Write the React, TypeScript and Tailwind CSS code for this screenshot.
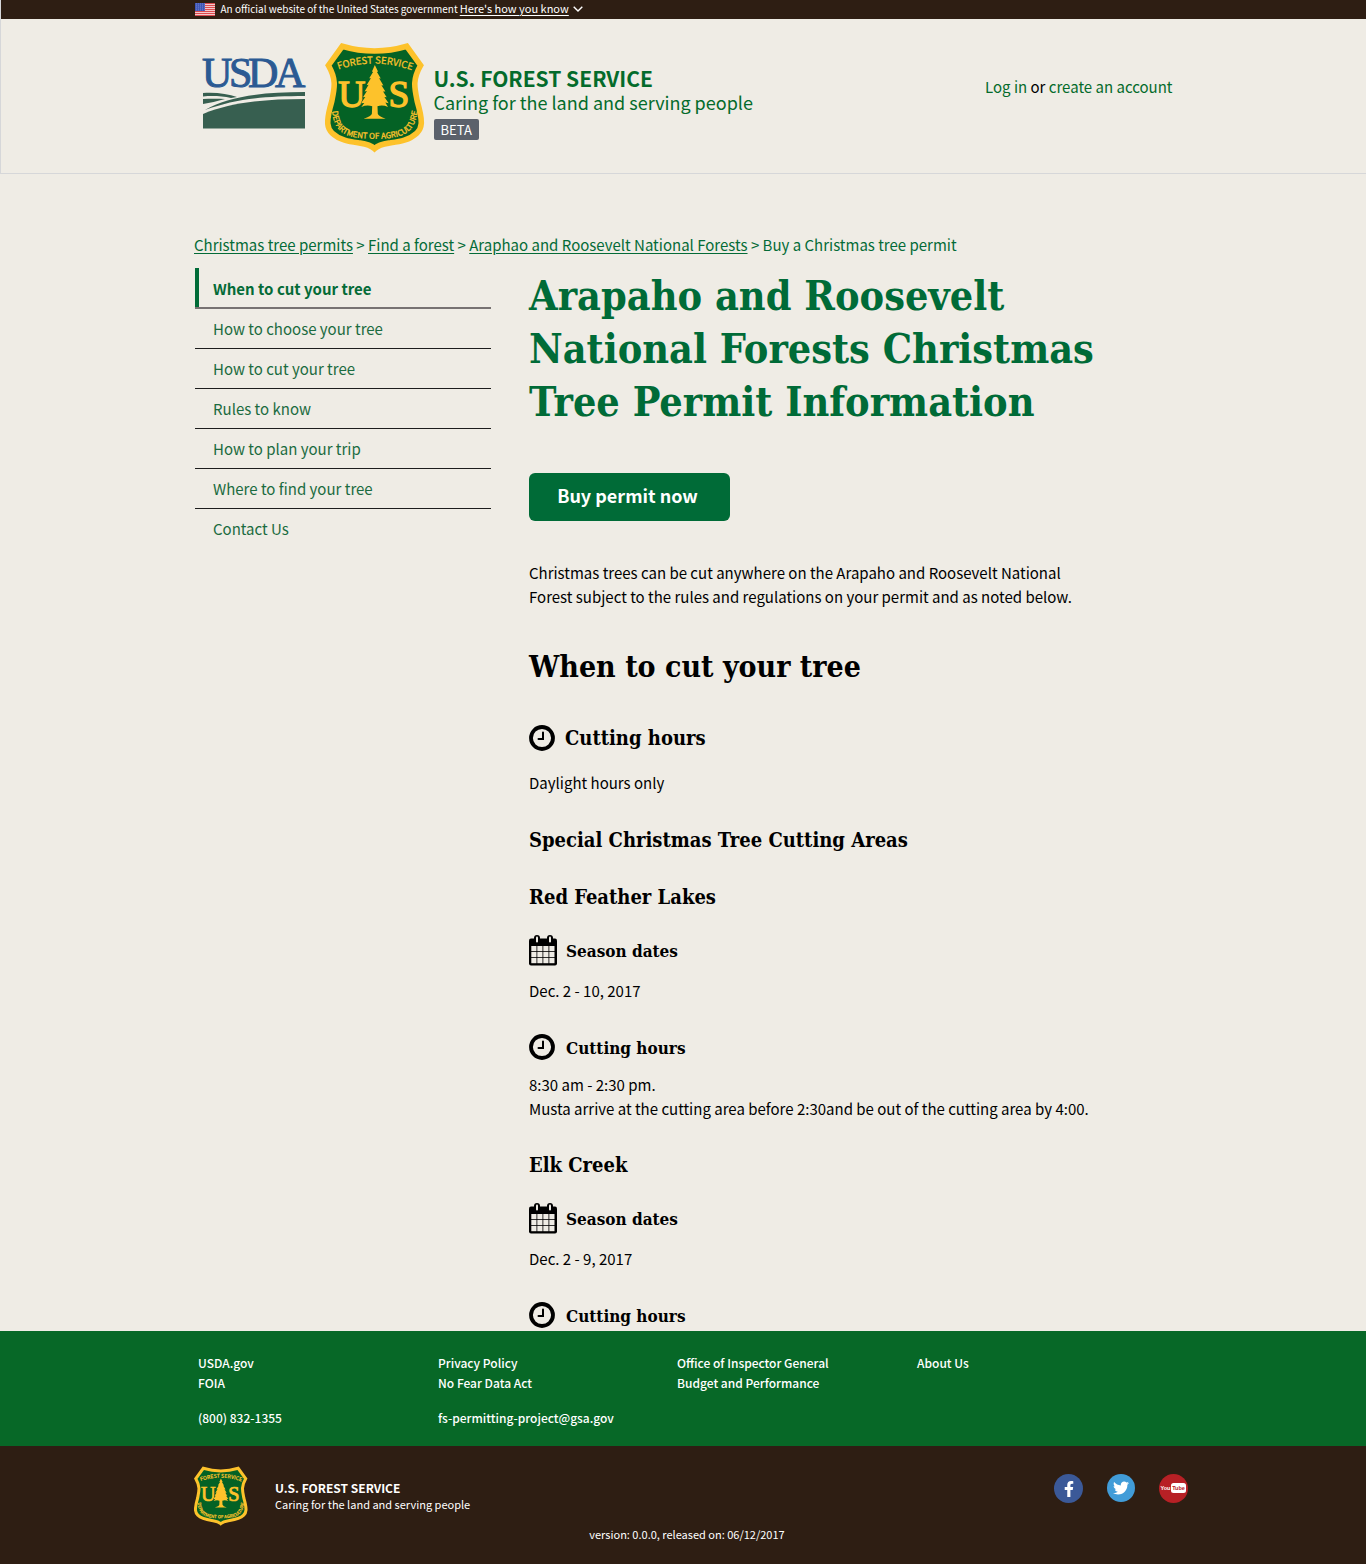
import type { ReactNode } from "react";
import { FaFacebookF, FaTwitter } from "react-icons/fa";

const navItems = [
  "When to cut your tree",
  "How to choose your tree",
  "How to cut your tree",
  "Rules to know",
  "How to plan your trip",
  "Where to find your tree",
  "Contact Us",
];

const footerColumns = [
  ["USDA.gov", "FOIA", "(800) 832-1355"],
  ["Privacy Policy", "No Fear Data Act", "fs-permitting-project@gsa.gov"],
  ["Office of Inspector General", "Budget and Performance"],
  ["About Us"],
];

function Container({ children, className = "" }: { children: ReactNode; className?: string }) {
  return <div className={`mx-auto w-full max-w-[978px] ${className}`}>{children}</div>;
}

function Flag() {
  return (
    <svg viewBox="0 0 20 13" className="h-[13px] w-5 shrink-0" aria-hidden="true">
      <rect width="20" height="13" fill="#f3c9cb" />
      {[0, 2, 4, 6, 8, 10, 12].map((y) => (
        <rect key={y} y={y} width="20" height="1" fill="#dc4a4e" />
      ))}
      <rect width="10" height="8" fill="#3f56b5" />
      {[1, 3, 5, 7].map((y) =>
        [1, 3, 5, 7, 9].map((x) => (
          <rect key={`${x}-${y}`} x={x} y={y - 0.5} width="0.8" height="0.8" fill="#8f9cdc" />
        )),
      )}
    </svg>
  );
}

function UsdaLogo() {
  return (
    <svg viewBox="0 0 103 72" className="h-[72px] w-[103px] shrink-0 overflow-visible" role="img" aria-label="USDA">
      <text
        x="0 27 46 73"
        y="30"
        fontFamily="'Liberation Serif', serif"
        fontSize="42"
        fill="#2b5a93"
        stroke="#2b5a93"
        strokeWidth="1"
      >
        USDA
      </text>
      <g fill="#375f50">
        <path d="M1 36 C14 35 26 37 35 40 L29 41 C20 39 10 38.500 1 39.500Z" />
        <path d="M1 42 C9 41.500 16 41.500 23 42 C15 44 8 46 1 47Z" />
        <path d="M3 53 C25 40 58 35 103 35 V39 C62 39 33 42 3 53Z" />
        <path d="M1 57 C28 46 60 42 103 42 V71.500 H1Z" />
      </g>
    </svg>
  );
}

function Shield({ className, id }: { className: string; id: string }) {
  return (
    <svg viewBox="402 34 301 337" className={className} role="img" aria-label="Forest Service shield">
      <defs>
        <path id={`${id}-top`} d="M436 120 Q551 78 670 122" />
        <path id={`${id}-bottom`} d="M421 236 C428 308 455 327 551 328 C647 327 674 308 683 236" />
      </defs>
      <path
        d="M453 47 Q551 76 649 47 L691 105 C665 150 673 175 681 215 C700 280 694 296 680 310 C655 334 620 337 594 341 Q565 345 551 358 Q537 345 508 341 C482 337 447 334 422 310 C408 296 402 280 421 215 C429 175 437 150 411 105Z"
        fill="#046225"
        stroke="#fdc22b"
        strokeWidth="17"
      />
      <g fill="#fdc22b" stroke="#fdc22b" fontFamily="'Noto Sans CJK SC', sans-serif" textAnchor="middle">
        <text fontSize="29" strokeWidth="0.8">
          <textPath href={`#${id}-top`} startOffset="50%">FOREST SERVICE</textPath>
        </text>
        <text fontSize="24" strokeWidth="1">
          <textPath href={`#${id}-bottom`} startOffset="50%">DEPARTMENT OF AGRICULTURE</textPath>
        </text>
        <g fontFamily="'Liberation Serif', serif" fontSize="114" strokeWidth="4">
          <text x="482" y="232">U</text>
          <text x="625" y="232">S</text>
        </g>
      </g>
      <path
        fill="#fdc22b"
        stroke="#046225"
        strokeWidth="3"
        paintOrder="stroke"
        d="M552 104 L562 124 L558 124 L570 145 L565 144 L578 166 L572 165 L584 184 L577 184 L588 202 L581 201 L594 220 L584 218 L592 231 Q575 224 560 229 L561 252 Q563 260 585 267 H518 Q541 260 543 252 L544 229 Q528 224 511 231 L520 219 L510 220 L523 201 L516 202 L528 183 L521 184 L533 164 L527 165 L540 144 L535 144 L547 124 L543 124Z"
      />
    </svg>
  );
}

function ClockIcon() {
  return (
    <svg viewBox="0 0 26 26" className="size-[26px] shrink-0" fill="none" stroke="#000" aria-hidden="true">
      <circle cx="13" cy="13" r="11" strokeWidth="3.800" />
      <path d="M14 7.500 V14 H9.500" strokeWidth="2" strokeLinecap="round" />
    </svg>
  );
}

function CalendarIcon() {
  return (
    <svg viewBox="0 0 28 31" className="h-[31px] w-7 shrink-0" aria-hidden="true">
      <rect x="0" y="3.500" width="28" height="27" rx="2" fill="#000" />
      <rect x="5" y="0" width="6" height="9" rx="3" fill="#000" />
      <rect x="18" y="0" width="6" height="9" rx="3" fill="#000" />
      <rect x="7" y="1.500" width="2" height="6" rx="1" fill="#efece5" />
      <rect x="20" y="1.500" width="2" height="6" rx="1" fill="#efece5" />
      {[11, 17, 23].map((y) =>
        [2, 8, 14, 20].map((x) => (
          <rect key={`${x}-${y}`} x={x + 0.3} y={y} width="5.200" height="5.200" fill="#efece5" />
        )),
      )}
    </svg>
  );
}

function IconHeading({ icon, children }: { icon: ReactNode; children: ReactNode }) {
  return (
    <h4 className="flex h-8 items-center gap-[9px] font-[DejaVu_Serif_Condensed,DejaVu_Serif,serif] text-[17px] font-bold">
      <span className="flex w-7">{icon}</span>
      <span className="mt-[2px]">{children}</span>
    </h4>
  );
}

function AreaHeading({ children }: { children: ReactNode }) {
  return (
    <h3 className="font-[DejaVu_Serif_Condensed,DejaVu_Serif,serif] text-[20px] leading-8 font-bold">{children}</h3>
  );
}

function FooterLink({ children }: { children: string }) {
  return (
    <a href="#" className="hover:underline">
      {children}
    </a>
  );
}

export default function App() {
  return (
    <div className="bg-[#efece5] font-[Noto_Sans_CJK_SC,sans-serif] text-[15px] leading-6 text-black">
      <header className="border-b border-l border-[#d6d7d9]">
        <div className="bg-[#2e1e13] text-white">
          <Container className="flex h-[19px] items-center text-[10px] leading-4">
            <Flag />
            <span className="ml-[6px] pb-px">An official website of the United States government</span>
            <button type="button" className="ml-[2px] flex items-center gap-1 pb-[3px]">
              <span className="text-[11px] underline underline-offset-2">Here's how you know</span>
              <svg viewBox="0 0 10 6" className="mt-[2px] h-[6px] w-[10px]" fill="none" stroke="#fff" aria-hidden="true">
                <path d="M0.700 0.700 L5 5 L9.300 0.700" strokeWidth="1.400" />
              </svg>
            </button>
          </Container>
        </div>
        <Container className="flex min-h-[154px] flex-wrap items-start justify-between pt-[23px]">
          <div className="flex">
            <div className="mt-[15px] ml-[7px]">
              <UsdaLogo />
            </div>
            <Shield id="header" className="ml-5 h-[111px] w-[100px] shrink-0" />
            <div className="ml-[9px] pt-6 text-[#046b2b]">
              <p className="text-[21px] leading-6 font-bold">U.S. FOREST SERVICE</p>
              <p className="text-[18px] leading-6">Caring for the land and serving people</p>
              <span className="mt-[5px] block w-fit rounded-[2px] bg-[#5b616b] px-[7px] text-[13px] leading-[21px] text-white">
                BETA
              </span>
            </div>
          </div>
          <p className="mt-[33px]">
            <a href="#" className="text-[#046b2b]">Log in</a> or{" "}
            <a href="#" className="text-[#046b2b]">create an account</a>
          </p>
        </Container>
      </header>

      <Container className="pt-[59px]">
        <nav aria-label="Breadcrumb" className="text-[#046b37]">
          <a href="#" className="underline underline-offset-2">Christmas tree permits</a> {">"}{" "}
          <a href="#" className="underline underline-offset-2">Find a forest</a> {">"}{" "}
          <a href="#" className="underline underline-offset-2">Araphao and Roosevelt National Forests</a> {">"} Buy a
          Christmas tree permit
        </nav>
        <div className="mt-[11px] flex flex-col md:flex-row">
          <nav aria-label="Sections" className="w-full shrink-0 pl-px md:w-[297px]">
            <ul>
              {navItems.map((item, i) => (
                <li
                  key={item}
                  className={
                    i === 0
                      ? "border-b-2 border-[#777272]"
                      : i < navItems.length - 1
                        ? "border-b border-[#1d1d1d]"
                        : ""
                  }
                >
                  <a
                    href="#"
                    className={
                      i === 0
                        ? "block border-l-4 border-[#006b37] pt-[9px] pb-[6px] pl-[14px] font-bold text-[#046b37]"
                        : "block pt-2 pb-[7px] pl-[18px] text-[#1b6b40]"
                    }
                  >
                    {item}
                  </a>
                </li>
              ))}
            </ul>
          </nav>
          <main className="min-w-0 flex-1 pt-[2px] md:pl-[38px]">
            <h1 className="max-w-[600px] font-[DejaVu_Serif_Condensed,DejaVu_Serif,serif] text-[41px] leading-[53px] font-bold text-[#006b37]">
              Arapaho and Roosevelt National Forests Christmas Tree Permit Information
            </h1>
            <button
              type="button"
              className="mt-11 block h-12 w-[201px] rounded-md bg-[#006b37] pr-1 pb-1 text-[18px] font-bold text-white"
            >
              Buy permit now
            </button>
            <p className="mt-10 max-w-[570px]">
              Christmas trees can be cut anywhere on the Arapaho and Roosevelt National Forest subject to the rules and
              regulations on your permit and as noted below.
            </p>
            <h2 className="mt-[38px] font-[DejaVu_Serif_Condensed,DejaVu_Serif,serif] text-[30px] leading-10 font-bold">
              When to cut your tree
            </h2>
            <h3 className="mt-[35px] flex h-8 items-center gap-[10px] font-[DejaVu_Serif_Condensed,DejaVu_Serif,serif] text-[20px] font-bold">
              <ClockIcon />
              Cutting hours
            </h3>
            <p className="mt-[17px]">Daylight hours only</p>
            <div className="mt-[29px]">
              <AreaHeading>Special Christmas Tree Cutting Areas</AreaHeading>
            </div>
            <section className="mt-[25px]">
              <AreaHeading>Red Feather Lakes</AreaHeading>
              <div className="mt-[21px]">
                <IconHeading icon={<CalendarIcon />}>Season dates</IconHeading>
              </div>
              <p className="mt-[13px]">Dec. 2 - 10, 2017</p>
              <div className="mt-7">
                <IconHeading icon={<ClockIcon />}>Cutting hours</IconHeading>
              </div>
              <p className="mt-[10px]">
                8:30 am - 2:30 pm.
                <br />
                Musta arrive at the cutting area before 2:30and be out of the cutting area by 4:00.
              </p>
            </section>
            <section className="mt-7">
              <AreaHeading>Elk Creek</AreaHeading>
              <div className="mt-[21px]">
                <IconHeading icon={<CalendarIcon />}>Season dates</IconHeading>
              </div>
              <p className="mt-[13px]">Dec. 2 - 9, 2017</p>
              <div className="mt-7">
                <IconHeading icon={<ClockIcon />}>Cutting hours</IconHeading>
              </div>
            </section>
          </main>
        </div>
      </Container>

      <footer className="font-medium text-white">
        <div className="bg-[#076827] pt-[22px] pb-[18px] text-[12px] leading-5">
          <Container className="grid grid-cols-2 pl-1 md:grid-cols-[240px_239px_240px_1fr]">
            {footerColumns.map((column) => (
              <ul key={column[0]}>
                {column.map((label, i) => (
                  <li key={label} className={i === 2 ? "mt-[15px]" : ""}>
                    <FooterLink>{label}</FooterLink>
                  </li>
                ))}
              </ul>
            ))}
          </Container>
        </div>
        <div className="bg-[#2e1e13] pt-5 pb-[21px]">
          <Container>
            <div className="flex items-start">
              <Shield id="footer" className="h-[60px] w-[54px] shrink-0" />
              <div className="ml-[27px] pt-[14px]">
                <p className="text-[12px] leading-4 font-bold">U.S. FOREST SERVICE</p>
                <p className="text-[11px] leading-[17px] font-normal">Caring for the land and serving people</p>
              </div>
              <div className="mt-2 ml-auto -mr-4 flex gap-6 max-[1040px]:mr-0">
                <a
                  href="#"
                  aria-label="Facebook"
                  className="flex size-[29px] items-center justify-center rounded-full bg-[#3b5998]"
                >
                  <FaFacebookF className="size-4" />
                </a>
                <a
                  href="#"
                  aria-label="Twitter"
                  className="flex size-[28px] items-center justify-center rounded-full bg-[#419cd8]"
                >
                  <FaTwitter className="size-4" />
                </a>
                <a href="#" aria-label="YouTube" className="block size-[29px] rounded-full bg-[#b72025]">
                  <svg viewBox="0 0 29 29" className="size-full" aria-hidden="true">
                    <rect x="12" y="9" width="15" height="10" rx="2.500" fill="#fff" />
                    <g
                      fontFamily="'Liberation Sans', sans-serif"
                      fontWeight="bold"
                      fontSize="5.500"
                      textAnchor="middle"
                    >
                      <text x="6.500" y="16" fill="#fff">You</text>
                      <text x="19.500" y="16" fill="#b72025">Tube</text>
                    </g>
                  </svg>
                </a>
              </div>
            </div>
            <p className="pl-2 text-center text-[11px] leading-[17px] font-normal">
              version: 0.0.0, released on: 06/12/2017
            </p>
          </Container>
        </div>
      </footer>
    </div>
  );
}
